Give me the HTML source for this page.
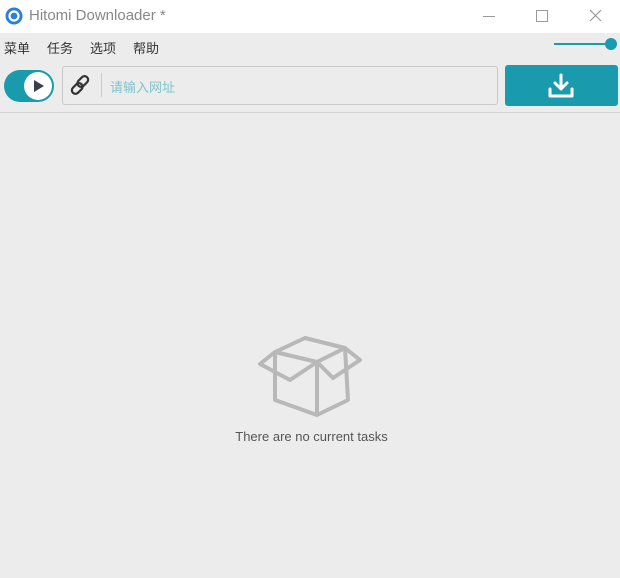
<!DOCTYPE html>
<html><head><meta charset="utf-8"><style>
body{margin:0;width:620px;height:578px;background:#ececec;font-family:"Liberation Sans","Noto Sans CJK SC",sans-serif;position:relative;overflow:hidden}
.tb{position:absolute;left:0;top:0;width:620px;height:33px;background:#fff}
.abs{position:absolute}
.m{position:absolute;top:38px;font-size:13px;color:#333}
</style></head><body>
<div class="tb"></div>
<svg class="abs" style="left:5px;top:7px" width="18" height="18" viewBox="0 0 18 18"><circle cx="9" cy="9" r="8.5" fill="#2a7fd8"/><circle cx="9" cy="9" r="4.5" fill="none" stroke="#fff" stroke-width="2.2"/></svg>
<div class="abs" style="left:29px;top:7px;font-size:15px;color:#888">Hitomi Downloader *</div>
<div class="abs" style="left:483px;top:16px;width:12px;height:1px;background:#999"></div>
<div class="abs" style="left:536px;top:10px;width:10px;height:10px;border:1px solid #999"></div>
<svg class="abs" style="left:589px;top:9px" width="13" height="13"><path d="M1 1L12 12M12 1L1 12" stroke="#999" stroke-width="1.2"/></svg>
<div class="m" style="left:4px">菜单</div>
<div class="m" style="left:47px">任务</div>
<div class="m" style="left:90px">选项</div>
<div class="m" style="left:133px">帮助</div>
<div class="abs" style="left:554px;top:43px;width:56px;height:2px;background:#1a9bad"></div>
<div class="abs" style="left:605px;top:38px;width:12px;height:12px;border-radius:50%;background:#1a9bad"></div>
<div class="abs" style="left:4px;top:70px;width:50px;height:32px;border-radius:16px;background:#1a9bad"></div>
<div class="abs" style="left:24px;top:72px;width:28px;height:28px;border-radius:50%;background:#fff"></div>
<svg class="abs" style="left:24px;top:72px" width="28" height="28"><path d="M10 8L20 14L10 20Z" fill="#3a3f4a"/></svg>
<div class="abs" style="left:62px;top:66px;width:434px;height:37px;border:1px solid #c8c8c8;border-radius:3px;background:#ececec"></div>
<svg class="abs" style="left:69px;top:74px" width="22" height="22" viewBox="0 0 20 20"><g fill="none" stroke="#333" stroke-width="2"><rect x="9" y="1" width="6.5" height="11" rx="3.2" transform="rotate(45 12 7)"/><rect x="4.5" y="8" width="6.5" height="11" rx="3.2" transform="rotate(45 8 13)"/></g></svg>
<div class="abs" style="left:101px;top:73px;width:1px;height:24px;background:#ccc"></div>
<div class="abs" style="left:110px;top:77px;font-size:13px;color:#7fc3cc">请输入网址</div>
<div class="abs" style="left:505px;top:65px;width:113px;height:41px;border-radius:3px;background:#1a9bad"></div>
<svg class="abs" style="left:545px;top:71px" width="32" height="30" viewBox="0 0 32 30"><g fill="none" stroke="#fff" stroke-width="3" stroke-linecap="round" stroke-linejoin="round"><path d="M16 4V18M10 12L16 18L22 12"/><path d="M5 18V25H27V18"/></g></svg>
<div class="abs" style="left:0;top:112px;width:620px;height:1px;background:#d4d4d4"></div>
<svg class="abs" style="left:0;top:0" width="620" height="578"><g fill="none" stroke="#b8b8b8" stroke-width="4" stroke-linejoin="round"><path d="M275 352L305 338L345 348L317 362Z"/><path d="M275 352L275 400L317 415L317 362"/><path d="M345 348L348 400L317 415"/><path d="M275 352L260 364L290 380L317 362"/><path d="M345 348L360 360L333 378L317 362"/></g></svg>
<div class="abs" style="left:0;width:620px;text-align:center;top:429px;font-size:13px;color:#555;padding-left:3px;box-sizing:border-box">There are no current tasks</div>
</body></html>
